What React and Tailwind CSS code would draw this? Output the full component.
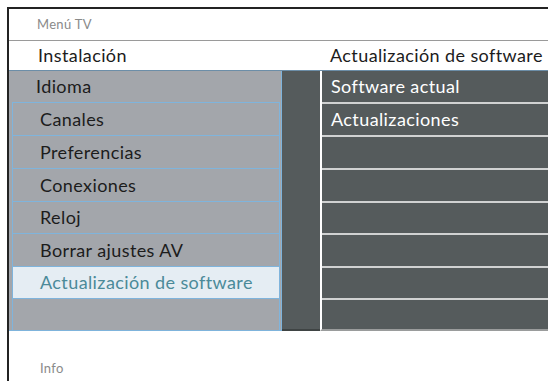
import React from "react";

const leftItems = [
  { label: "Idioma", h: "h-[31px]", first: true },
  { label: "Canales", h: "h-[33px]" },
  { label: "Preferencias", h: "h-[33px]" },
  { label: "Conexiones", h: "h-[33px]" },
  { label: "Reloj", h: "h-[32px]" },
  { label: "Borrar ajustes AV", h: "h-[33px]" },
  { label: "Actualización de software", h: "h-[32px]", selected: true },
  { label: "", h: "h-[33px]" },
];

const rightItems = [
  { label: "Software actual", h: "h-[31px]" },
  { label: "Actualizaciones", h: "h-[33px]" },
  { label: "", h: "h-[33px]" },
  { label: "", h: "h-[33px]" },
  { label: "", h: "h-[32px]" },
  { label: "", h: "h-[33px]" },
  { label: "", h: "h-[32px]" },
  { label: "", h: "h-[33px]" },
];

function LeftRow({ item }) {
  if (item.first) {
    return (
      <div className={`${item.h} flex items-center pl-[27px] text-[18px] tracking-[0.4px] text-[#1c1c1c]`}>
        {item.label}
      </div>
    );
  }
  return (
    <div className={`${item.h} pl-[3px] pr-[1px]`}>
      <div
        className={`flex h-full items-center border-x border-t border-[#7fb4dc] pl-[27px] text-[18px] tracking-[0.4px] ${
          item.selected ? "bg-[#e5edf3] text-[#4b8a99]" : "text-[#1c1c1c]"
        }`}
      >
        {item.label}
      </div>
    </div>
  );
}

function RightRow({ item, index }) {
  return (
    <div
      className={`${item.h} flex items-center pl-[9px] text-[18px] tracking-[0.4px] text-white ${
        index === 0 ? "" : "border-t-2 border-[#d0d2d2]"
      }`}
    >
      {item.label}
    </div>
  );
}

export default function App() {
  return (
    <div className="h-[381px] w-[548px] overflow-hidden bg-white pl-[7px] pt-[7px] font-['Lato','Open_Sans',sans-serif]">
      <div className="flex h-full flex-col border-l-2 border-t-2 border-[#232323]">
        <div className="flex h-[31px] items-center pl-[28px] pt-[1px] text-[13px] tracking-[0.3px] text-[#8a8a8a]">Menú TV</div>
        <div className="h-px bg-[#9a9a9a]" />
        <div className="flex h-[29px] items-center text-[18px] tracking-[0.4px] text-[#1c1c1c]">
          <div className="w-[311px] pl-[29px]">Instalación</div>
          <div className="pl-[10px]">Actualización de software</div>
        </div>
        <div className="h-px bg-[#6c8ea8]" />
        <div className="flex h-[260px]">
          <div className="w-[273px] border-r border-b border-[#7fb4dc] bg-[#a3a6ab]">
            {leftItems.map((item, i) => (
              <LeftRow key={i} item={item} />
            ))}
          </div>
          <div className="w-[38px] border-b-2 border-[#3f4444] bg-[#555b5c]" />
          <div className="flex-1 border-l-2 border-b-2 border-l-white border-b-[#9a9c9c] bg-[#555b5c]">
            {rightItems.map((item, i) => (
              <RightRow key={i} item={item} index={i} />
            ))}
          </div>
        </div>
        <div className="flex flex-1 items-center pl-[31px] pt-[26px] text-[13px] tracking-[0.3px] text-[#8a8a8a]">Info</div>
      </div>
    </div>
  );
}
